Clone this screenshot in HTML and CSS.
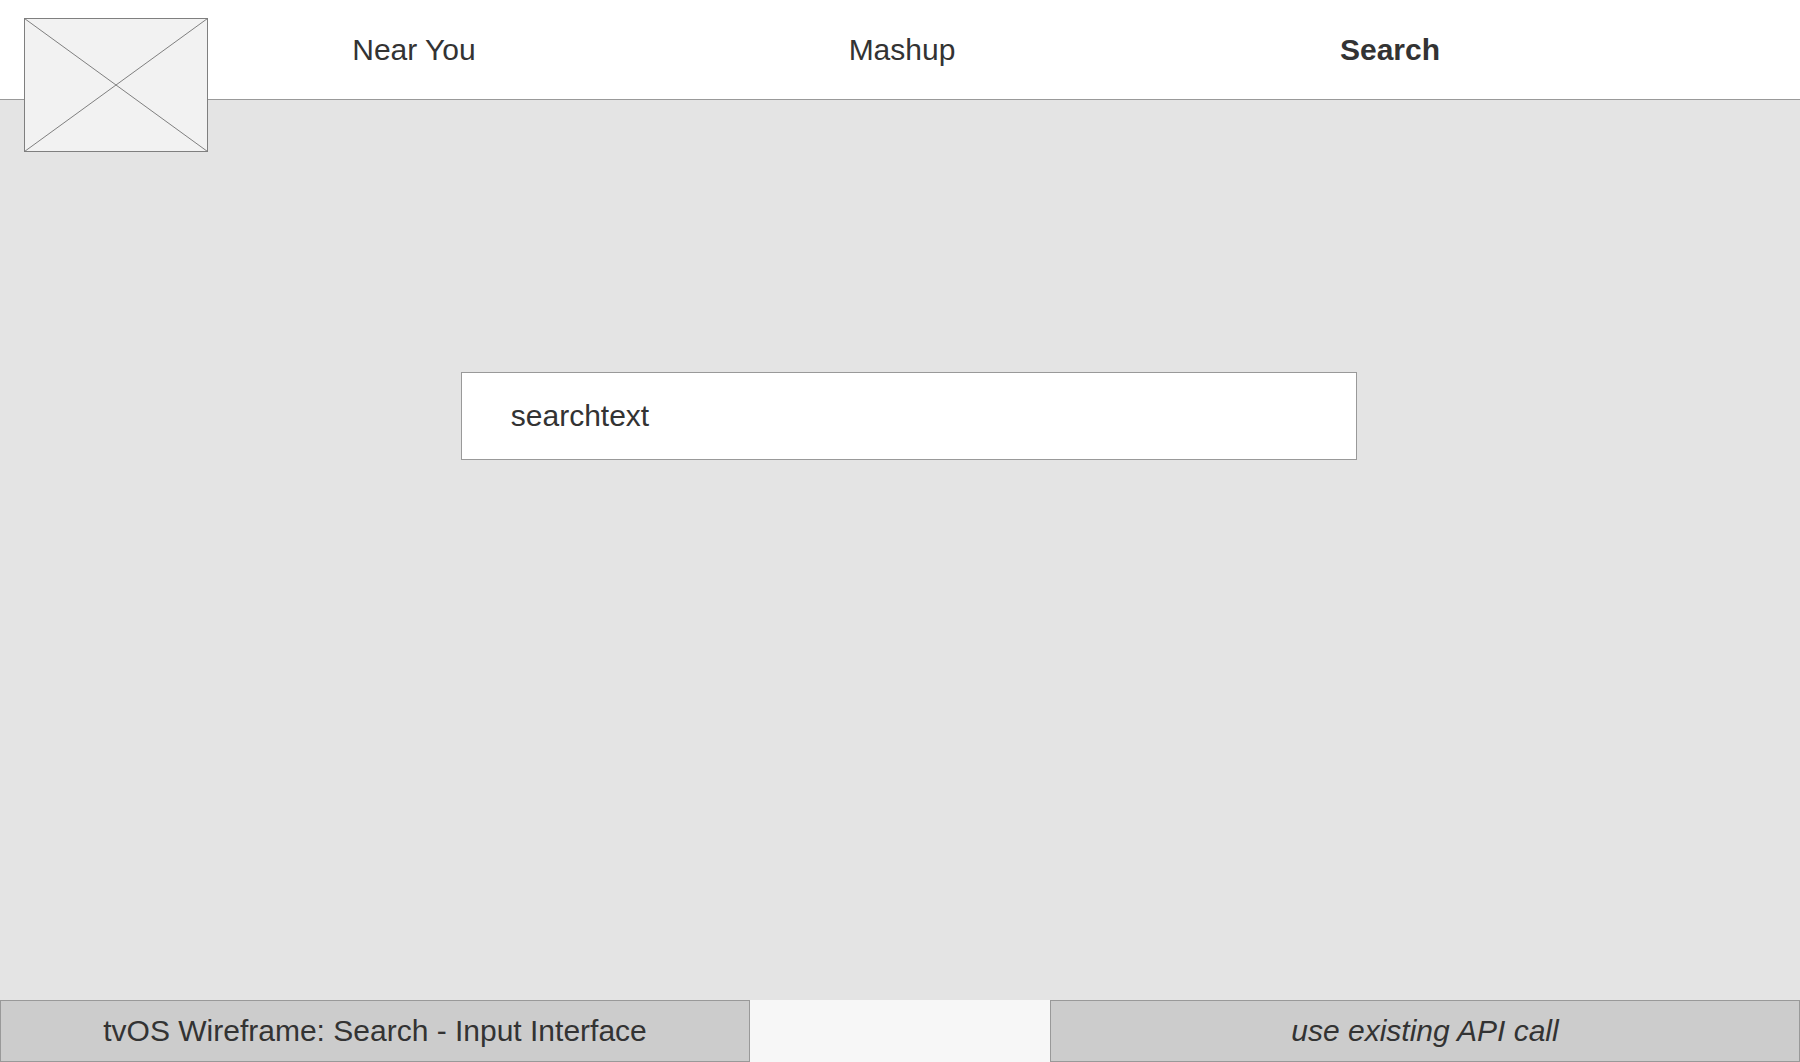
FILE: index.html
```html
<!DOCTYPE html>
<html lang="en">
<head>
<meta charset="utf-8">
<meta name="viewport" content="width=device-width, initial-scale=1">
<title>Search</title>
<link rel="stylesheet" href="styles.css">
</head>
<body>
<header class="topbar">
  <svg class="logo" viewBox="0 0 184 134" role="img" aria-label="Logo placeholder"><rect x=".5" y=".5" width="183" height="133" fill="#f2f2f2" stroke="#7f7f7f"/><path d="M.5.5l183 133M183.500.5L.5 133.500" fill="none" stroke="#7f7f7f"/></svg>
  <nav class="tabs">
    <a class="tab" href="#near">Near You</a>
    <a class="tab" href="#mashup">Mashup</a>
    <a class="tab tab-active" href="#search" aria-current="page">Search</a>
  </nav>
</header>
<main class="content">
  <input class="search" type="text" aria-label="Search" value="searchtext">
</main>
<footer class="notes">
  <p class="note">tvOS Wireframe: Search - Input Interface</p>
  <p class="note note-api">use existing API call</p>
</footer>
</body>
</html>
```
FILE: styles.css
```css
* { box-sizing: border-box; }
body {
  margin: 0;
  min-height: 100vh;
  display: flex;
  flex-direction: column;
  background: #f7f7f7;
  color: #333;
  font: 30px/36px "Liberation Sans", Arial, sans-serif;
}
.topbar {
  position: relative;
  display: flex;
  height: 100px;
  padding-left: 24px;
  background: #fff;
  border-bottom: 1px solid #999;
}
.logo {
  flex: none;
  width: 184px;
  height: 134px;
  margin-top: 18px;
}
.tabs {
  flex: 1;
  display: grid;
  grid-template-columns: repeat(3, 1fr);
  align-items: center;
  margin-left: -38px;
  margin-right: 166px;
}
.tab {
  text-align: center;
  color: inherit;
  text-decoration: none;
}
.tab-active { font-weight: 700; }
.content {
  flex: 1;
  padding: 272px 24.600% 0 25.600%;
  background: #e4e4e4;
}
.search {
  display: block;
  width: 100%;
  height: 88px;
  padding: 0 49px;
  border: 1px solid #999;
  border-radius: 0;
  background: #fff;
  color: inherit;
  font: inherit;
}
.notes {
  display: grid;
  grid-template-columns: 5fr 5fr;
  column-gap: 16.667%;
}
.note {
  margin: 0;
  padding: 12px;
  border: 1px solid #999;
  background: #ccc;
  text-align: center;
}
.note-api { font-style: italic; }
```
